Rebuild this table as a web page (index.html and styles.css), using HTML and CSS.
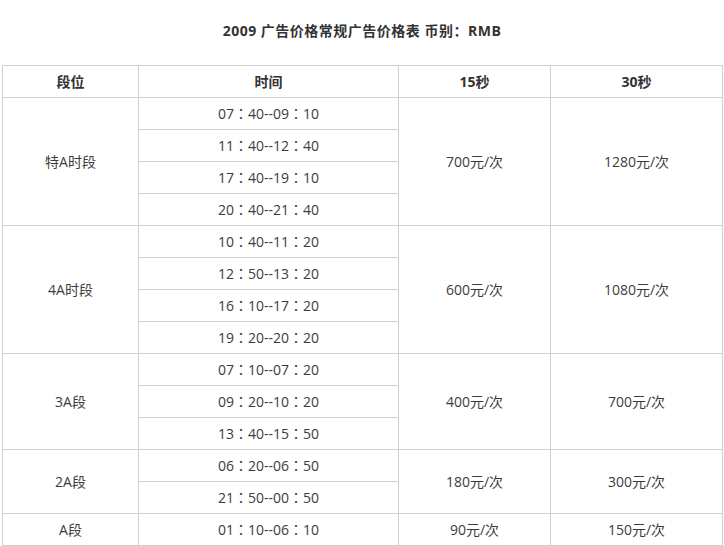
FILE: index.html
```html
<!DOCTYPE html>
<html lang="zh">
<head>
<meta charset="utf-8">
<link rel="stylesheet" href="styles.css">
</head>
<body>
<div class="page">
  <h1 class="title">2009 广告价格常规广告价格表 币别<span class="colon">：</span>RMB</h1>
  <table class="prices">
    <colgroup>
      <col class="c1"><col class="c2"><col class="c3"><col class="c4">
    </colgroup>
    <thead>
      <tr><th>段位</th><th>时间</th><th>15秒</th><th>30秒</th></tr>
    </thead>
    <tbody>
      <tr><td rowspan="4">特A时段</td><td>07<span class="colon">：</span>40--09<span class="colon">：</span>10</td><td rowspan="4">700元/次</td><td rowspan="4">1280元/次</td></tr>
      <tr><td>11<span class="colon">：</span>40--12<span class="colon">：</span>40</td></tr>
      <tr><td>17<span class="colon">：</span>40--19<span class="colon">：</span>10</td></tr>
      <tr><td>20<span class="colon">：</span>40--21<span class="colon">：</span>40</td></tr>
      <tr><td rowspan="4">4A时段</td><td>10<span class="colon">：</span>40--11<span class="colon">：</span>20</td><td rowspan="4">600元/次</td><td rowspan="4">1080元/次</td></tr>
      <tr><td>12<span class="colon">：</span>50--13<span class="colon">：</span>20</td></tr>
      <tr><td>16<span class="colon">：</span>10--17<span class="colon">：</span>20</td></tr>
      <tr><td>19<span class="colon">：</span>20--20<span class="colon">：</span>20</td></tr>
      <tr><td rowspan="3">3A段</td><td>07<span class="colon">：</span>10--07<span class="colon">：</span>20</td><td rowspan="3">400元/次</td><td rowspan="3">700元/次</td></tr>
      <tr><td>09<span class="colon">：</span>20--10<span class="colon">：</span>20</td></tr>
      <tr><td>13<span class="colon">：</span>40--15<span class="colon">：</span>50</td></tr>
      <tr><td rowspan="2">2A段</td><td>06<span class="colon">：</span>20--06<span class="colon">：</span>50</td><td rowspan="2">180元/次</td><td rowspan="2">300元/次</td></tr>
      <tr><td>21<span class="colon">：</span>50--00<span class="colon">：</span>50</td></tr>
      <tr><td>A段</td><td>01<span class="colon">：</span>10--06<span class="colon">：</span>10</td><td>90元/次</td><td>150元/次</td></tr>
    </tbody>
  </table>
</div>
</body>
</html>
```

FILE: styles.css
```css
html, body {
  margin: 0;
  padding: 0;
  background: #fff;
}
body {
  font-family: "Open Sans", "Noto Sans CJK SC", sans-serif;
  color: #333;
  font-size: 14px;
}
.page {
  padding: 21px 0 0 2px;
  width: 720px;
}
.title {
  margin: 0 0 24px 0;
  font-size: 14px;
  line-height: 20px;
  height: 20px;
  font-weight: bold;
  text-align: center;
  letter-spacing: 0.5px;
  color: #333;
}
.colon {
  font-family: "Noto Sans CJK TC", "Noto Sans CJK SC", sans-serif;
  line-height: 1;
}
.prices {
  width: 720px;
  table-layout: fixed;
  border-collapse: collapse;
  border: 1px solid #d0d0d0;
}
.c1 { width: 136px; }
.c2 { width: 260px; }
.c3 { width: 152px; }
.c4 { width: 172px; }
.prices tr {
  height: 32px;
}
.prices th,
.prices td {
  border: 1px solid #d0d0d0;
  text-align: center;
  vertical-align: middle;
  padding: 0;
  height: 31px;
  line-height: 20px;
}
.prices th {
  font-weight: bold;
  color: #333;
}
.prices td {
  font-weight: normal;
  color: #3c3c3c;
}
```
